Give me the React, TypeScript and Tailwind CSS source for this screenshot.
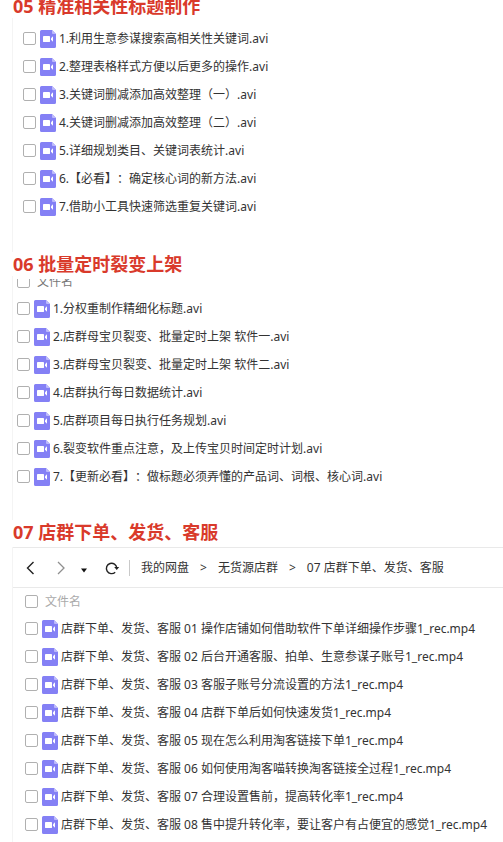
import React from 'react';

const basicFiles = [
  '1.利用生意参谋搜索高相关性关键词.avi',
  '2.整理表格样式方便以后更多的操作.avi',
  '3.关键词删减添加高效整理（一）.avi',
  '4.关键词删减添加高效整理（二）.avi',
  '5.详细规划类目、关键词表统计.avi',
  '6.【必看】：确定核心词的新方法.avi',
  '7.借助小工具快速筛选重复关键词.avi',
];

const listingFiles = [
  '1.分权重制作精细化标题.avi',
  '2.店群母宝贝裂变、批量定时上架 软件一.avi',
  '3.店群母宝贝裂变、批量定时上架 软件二.avi',
  '4.店群执行每日数据统计.avi',
  '5.店群项目每日执行任务规划.avi',
  '6.裂变软件重点注意，及上传宝贝时间定时计划.avi',
  '7.【更新必看】：做标题必须弄懂的产品词、词根、核心词.avi',
];

const orderFiles = [
  '店群下单、发货、客服 01 操作店铺如何借助软件下单详细操作步骤1_rec.mp4',
  '店群下单、发货、客服 02 后台开通客服、拍单、生意参谋子账号1_rec.mp4',
  '店群下单、发货、客服 03 客服子账号分流设置的方法1_rec.mp4',
  '店群下单、发货、客服 04 店群下单后如何快速发货1_rec.mp4',
  '店群下单、发货、客服 05 现在怎么利用淘客链接下单1_rec.mp4',
  '店群下单、发货、客服 06 如何使用淘客喵转换淘客链接全过程1_rec.mp4',
  '店群下单、发货、客服 07 合理设置售前，提高转化率1_rec.mp4',
  '店群下单、发货、客服 08 售中提升转化率，要让客户有占便宜的感觉1_rec.mp4',
];

const checkboxClass =
  'appearance-none w-[13px] h-[13px] mb-px shrink-0 rounded-[2px] border border-[#b0b0b0] bg-white checked:bg-[#8480f5]';

const VideoIcon: React.FC = () => (
  <svg className="w-4 h-[18px] shrink-0" viewBox="0 0 16 18" aria-hidden="true">
    <path d="M1.5 0H12l4 4v12.5a1.5 1.5 0 0 1-1.5 1.5h-13A1.5 1.5 0 0 1 0 16.5v-15A1.5 1.5 0 0 1 1.5 0Z" fill="#8480f5" />
    <path d="M12 0l4 4h-3A1 1 0 0 1 12 3Z" fill="#bdbafb" />
    <rect x="3" y="6" width="7" height="6" rx="0.4" fill="#fff" />
    <path d="M11 8.2L13 6.2v5.6l-2-2Z" fill="#fff" />
  </svg>
);

const SectionTitle: React.FC<{ children: React.ReactNode }> = ({ children }) => (
  <h2 className="pl-[13px] text-lg leading-6 font-bold text-[#d93a2b] whitespace-nowrap">{children}</h2>
);

const FileList: React.FC<{ files: string[] }> = ({ files }) => (
  <ul>
    {files.map((file) => (
      <li key={file}>
        <label className="flex items-center h-7 whitespace-nowrap">
          <input type="checkbox" className={checkboxClass} />
          <span className="flex items-center gap-[3px] ml-1">
            <VideoIcon />
            {file}
          </span>
        </label>
      </li>
    ))}
  </ul>
);

const Toolbar: React.FC = () => (
  <div className="flex items-center h-[41px] pl-3 border-y border-[#e9e9e9]">
    <button type="button" aria-label="后退" className="flex items-center justify-center w-3 h-5">
      <svg className="w-3 h-4" viewBox="0 0 12 16" fill="none" stroke="#222" strokeWidth="1.4">
        <path d="M8.5 2L2.5 8l6 6" />
      </svg>
    </button>
    <button type="button" aria-label="前进" className="flex items-center justify-center w-3 h-5 ml-[18px]">
      <svg className="w-3 h-4" viewBox="0 0 12 16" fill="none" stroke="#8f8f8f" strokeWidth="1.3">
        <path d="M3 2l6 6-6 6" />
      </svg>
    </button>
    <button type="button" aria-label="历史记录" className="flex items-center justify-center w-3 h-5 ml-[11px]">
      <svg className="w-3 h-4" viewBox="0 0 12 16" fill="#111">
        <path d="M3 8.5h6l-3 4Z" />
      </svg>
    </button>
    <button type="button" aria-label="刷新" className="flex items-center justify-center w-4 h-5 ml-[14px]">
      <svg className="w-4 h-4" viewBox="0 0 16 16" fill="none" stroke="#222" strokeWidth="1.4">
        <path d="M11.2 12.2A5.2 5.2 0 1 1 12.8 8" />
        <path d="M10.2 7h5l-2.5 3Z" fill="#222" stroke="none" />
      </svg>
    </button>
    <nav className="flex items-center gap-[11px] ml-[9px] pl-[11px] h-4 border-l border-[#c9c9c9] whitespace-nowrap">
      <a href="#disk">我的网盘</a>
      <span>&gt;</span>
      <a href="#store">无货源店群</a>
      <span>&gt;</span>
      <a href="#orders">07 店群下单、发货、客服</a>
    </nav>
  </div>
);

const App: React.FC = () => {
  return (
    <main className="min-h-screen overflow-hidden bg-white text-xs text-[#333] font-['Noto_Sans','Noto_Sans_CJK_SC',sans-serif] [text-spacing-trim:space-all]">
      {/* 05: the page is scrolled a little past the top of this title */}
      <section className="-mt-[6px]">
        <SectionTitle>05 精准相关性标题制作</SectionTitle>
        <div className="ml-3 pl-[10px] pt-[7px] pb-[31px] border-l border-[#f4f4f4]">
          <FileList files={basicFiles} />
        </div>
      </section>

      {/* 06 */}
      <section>
        <SectionTitle>06 批量定时裂变上架</SectionTitle>
        <div className="ml-3 pl-1 pt-[3px] pb-[29px] border-l border-[#f4f4f4]">
          <div className="flex items-end h-4 overflow-hidden">
            <label className="flex items-center gap-[7px] h-[26px] text-[#777]">
              <input type="checkbox" className={checkboxClass} />
              文件名
            </label>
          </div>
          <FileList files={listingFiles} />
        </div>
      </section>

      {/* 07 */}
      <section>
        <SectionTitle>07 店群下单、发货、客服</SectionTitle>
        <div className="ml-3 mt-[3px] pb-[3px] border-l border-[#f4f4f4]">
          <Toolbar />
          <div className="pl-3">
            <label className="flex items-center gap-[7px] h-[27px] text-[#aaa]">
              <input type="checkbox" className={checkboxClass} />
              文件名
            </label>
            <FileList files={orderFiles} />
          </div>
        </div>
      </section>
    </main>
  );
};

export default App;
